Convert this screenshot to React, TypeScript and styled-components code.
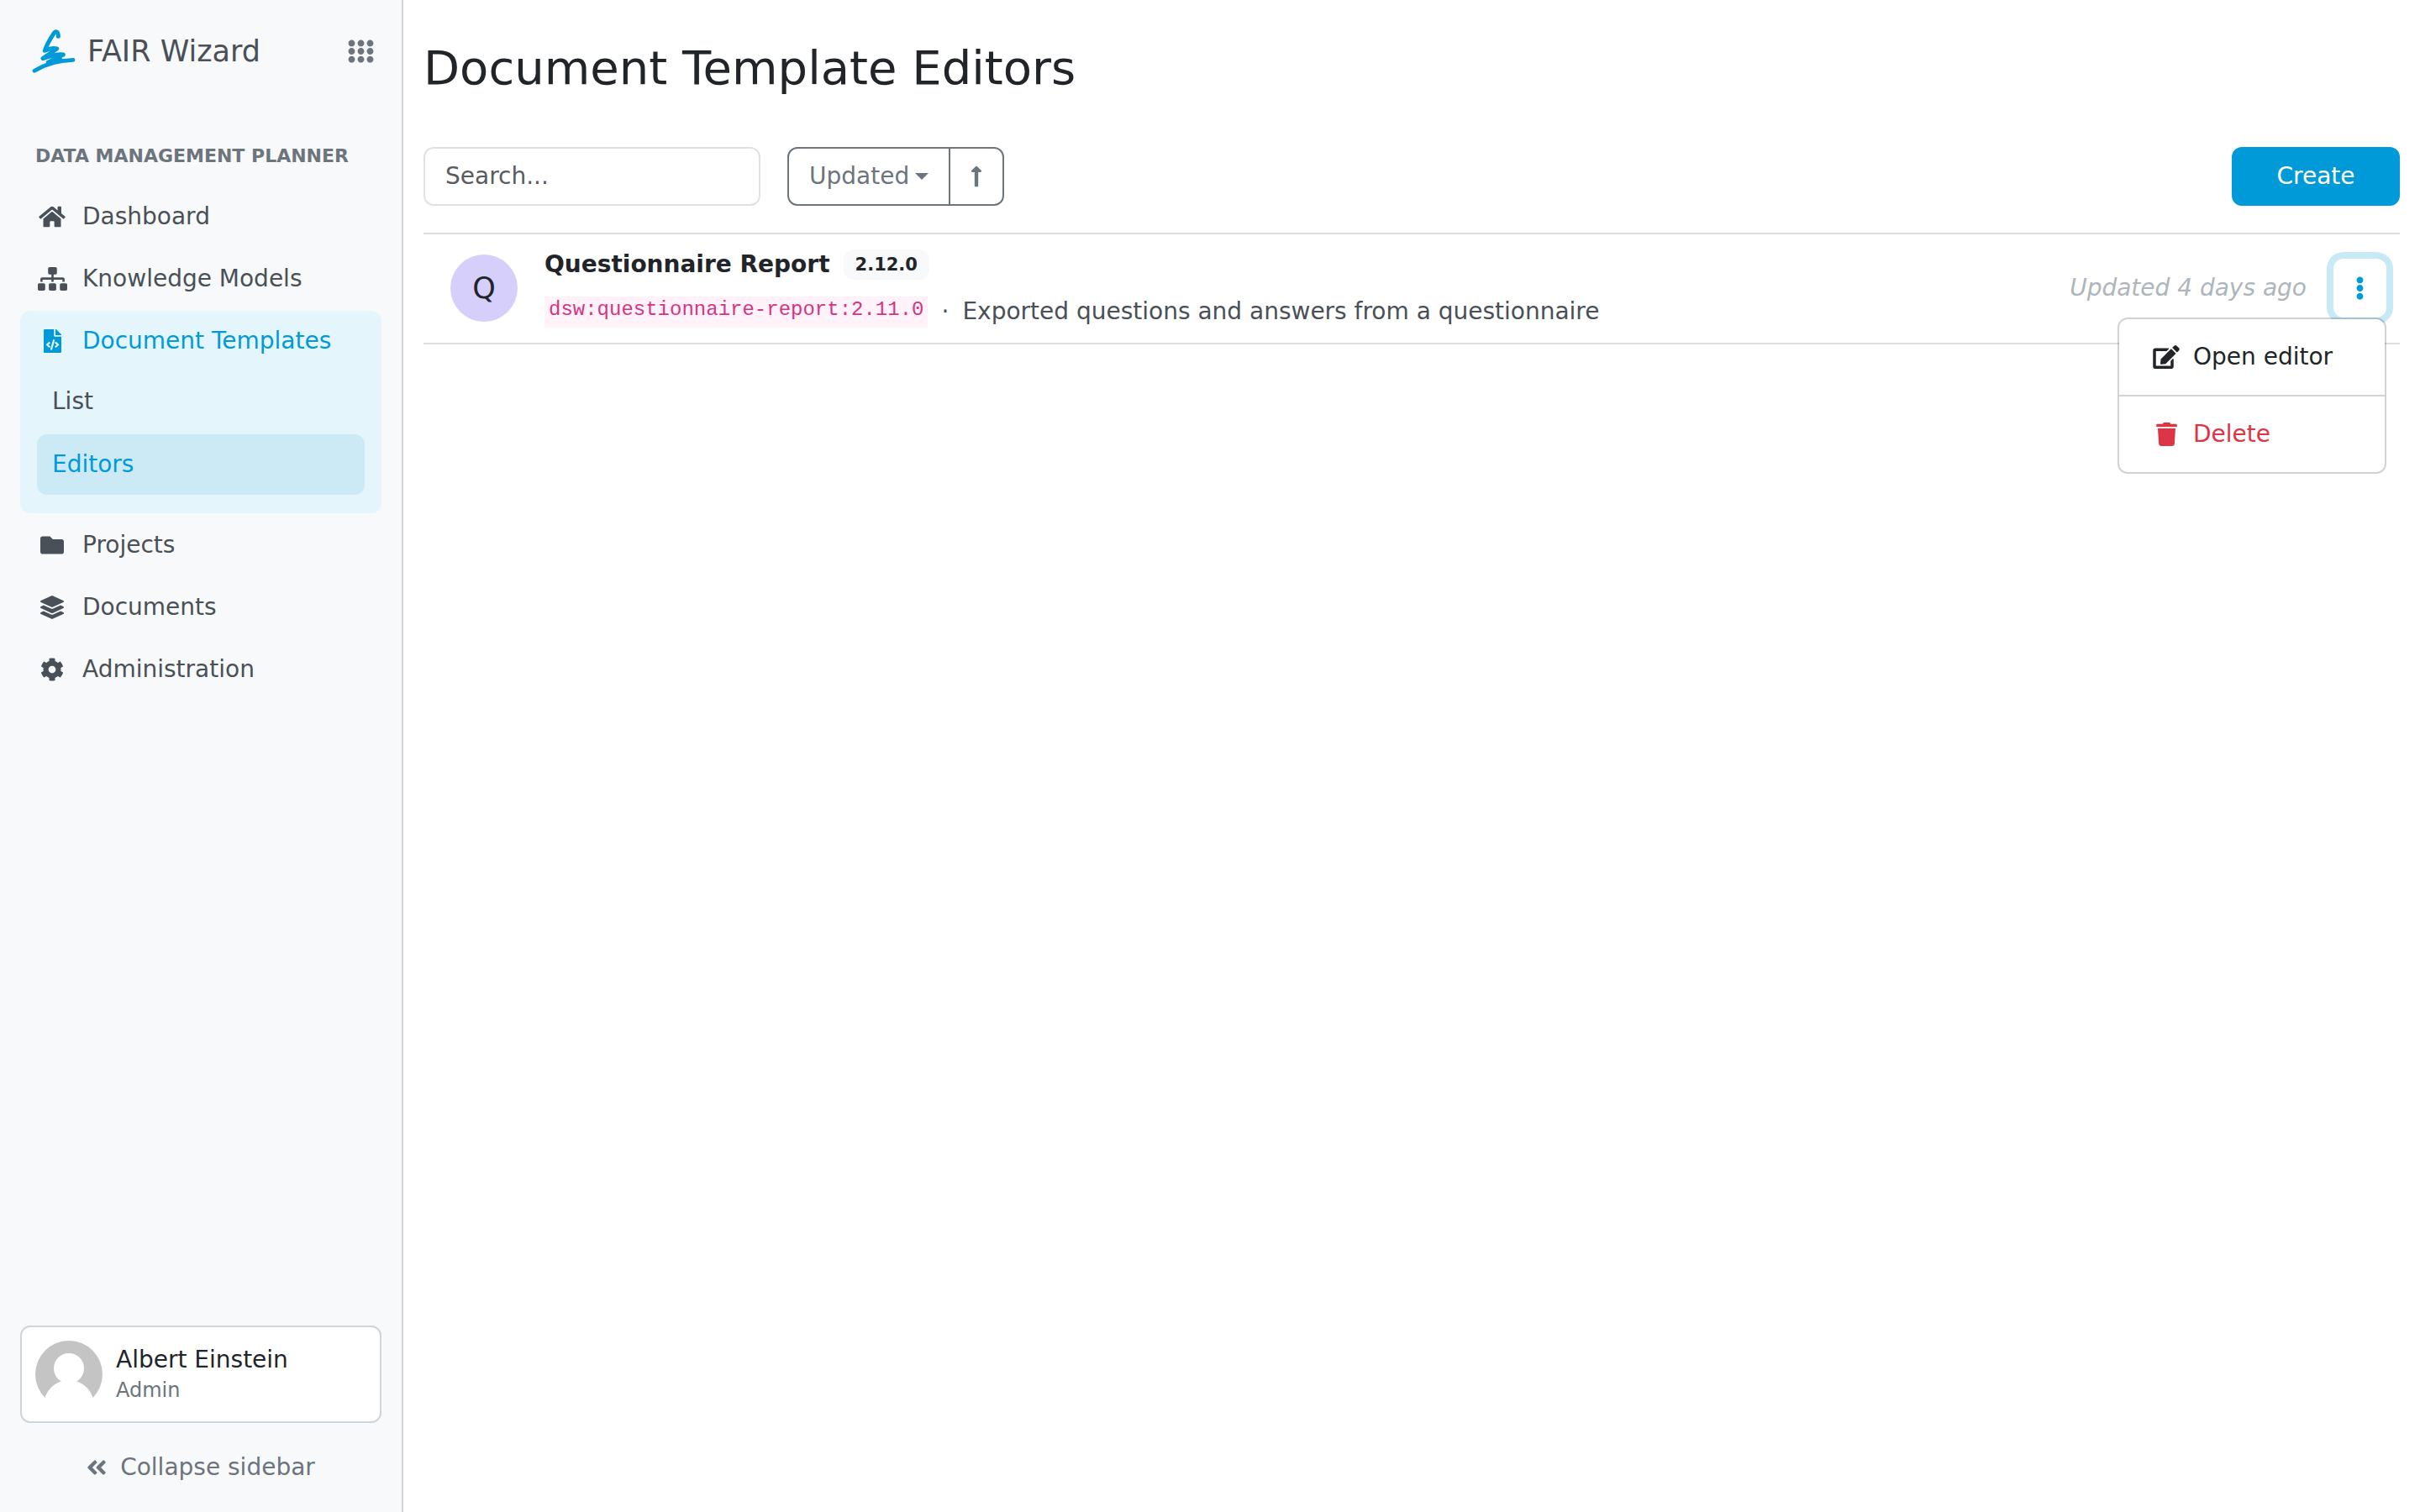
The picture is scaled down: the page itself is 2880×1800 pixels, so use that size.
import React, { useState } from 'react';
import styled, { createGlobalStyle, css } from 'styled-components';
import {
  FaAngleDoubleLeft,
  FaCog,
  FaEdit,
  FaEllipsisV,
  FaFileCode,
  FaFolder,
  FaHome,
  FaLayerGroup,
  FaLongArrowAltUp,
  FaSitemap,
  FaTrash,
} from 'react-icons/fa';

const color = {
  primary: '#009ad9',
  primaryTint: '#e5f5fc',
  primarySoft: '#cceaf6',
  ring: '#c8eaf6',
  text: '#212529',
  nav: '#495057',
  muted: '#6c757d',
  faint: '#adb5bd',
  danger: '#dc3545',
  code: '#d63384',
  codeBg: '#fff3f9',
  light: '#f8f9fb',
  border: '#ced4da',
  inputBorder: '#dee2e6',
  line: '#dedede',
  menuBorder: 'rgba(0, 0, 0, 0.175)',
};

const GlobalStyle = createGlobalStyle`
  *, *::before, *::after { box-sizing: border-box; }
  body {
    margin: 0;
    background: #fff;
    color: ${color.text};
    font-family: "DejaVu Sans", Verdana, sans-serif;
    font-size: 28px;
    line-height: 42px;
  }
  button, input, select { font: inherit; color: inherit; margin: 0; }
  button { background: none; border: 0; padding: 0; cursor: pointer; }
  a { color: inherit; text-decoration: none; }
  svg { display: block; flex: none; }
`;

const Shell = styled.div`
  display: flex;
  min-height: 100vh;
`;

const Sidebar = styled.aside`
  display: flex;
  flex-direction: column;
  flex: none;
  width: 480px;
  padding: 0 24px 17px;
  background: ${color.light};
  border-right: 2px solid ${color.border};
`;

const Brand = styled.div`
  display: flex;
  align-items: center;
  height: 122px;
  padding: 0 8px 0 14px;
`;

const BrandLink = styled.a`
  display: flex;
  align-items: center;
  flex: 1;
  gap: 14px;
  color: ${color.nav};
  font-size: 35px;
`;

const AppSwitch = styled.button`
  display: flex;
  color: ${color.muted};
`;

const Icon = styled.span<{ $glyph?: number; $width?: number }>`
  display: flex;
  justify-content: center;
  flex: none;
  width: ${(p) => (p.$width ? `${p.$width}px` : 'auto')};

  svg {
    width: ${(p) => p.$glyph ?? 28}px;
    height: 28px;
  }
`;

const SectionTitle = styled.h2`
  margin: 47px 0 19px;
  padding-left: 18px;
  color: ${color.muted};
  font-size: 22px;
  font-weight: 700;
  line-height: 34px;
  text-transform: uppercase;
`;

const NavList = styled.ul`
  display: flex;
  flex-direction: column;
  gap: 2px;
  margin: 0;
  padding: 0;
  list-style: none;
`;

const SubList = styled(NavList)`
  gap: 3px;
  padding: 0 20px 22px;
`;

const NavItem = styled.li<{ $open?: boolean }>`
  border-radius: 12px;
  background: ${(p) => (p.$open ? color.primaryTint : 'transparent')};
`;

const NavLink = styled.a<{ $active?: boolean }>`
  display: flex;
  align-items: center;
  gap: 18px;
  height: 72px;
  padding: 0 20px;
  color: ${(p) => (p.$active ? color.primary : color.nav)};
`;

const SubLink = styled(NavLink)`
  padding: 0 18px;
  border-radius: 12px;
  background: ${(p) => (p.$active ? color.primarySoft : 'transparent')};
`;

const UserCard = styled.a`
  display: flex;
  align-items: center;
  gap: 16px;
  margin-top: auto;
  padding: 16px;
  background: #fff;
  border: 2px solid ${color.border};
  border-radius: 12px;
`;

const UserText = styled.div`
  display: flex;
  flex-direction: column;
  padding-top: 2px;
  line-height: 36px;
`;

const UserRole = styled.span`
  color: ${color.muted};
  font-size: 24px;
`;

const Collapse = styled.button`
  display: flex;
  align-items: center;
  justify-content: center;
  gap: 16px;
  height: 72px;
  margin-top: 17px;
  color: ${color.muted};
`;

const Main = styled.main`
  flex: 1;
  min-width: 0;
  padding: 47px 24px 24px;
`;

const Title = styled.h1`
  margin: 0 0 60px;
  font-size: 56px;
  font-weight: 400;
  line-height: 68px;
`;

const Toolbar = styled.div`
  display: flex;
  align-items: stretch;
  gap: 32px;
  height: 70px;
  margin-bottom: 32px;
`;

const Search = styled.input`
  width: 401px;
  padding: 0 24px;
  background: #fff;
  border: 2px solid ${color.inputBorder};
  border-radius: 12px;

  &::placeholder {
    color: #585c5f;
    opacity: 1;
  }
`;

const SortGroup = styled.div`
  display: flex;
  color: ${color.muted};
  border: 2px solid ${color.muted};
  border-radius: 12px;
`;

const SortField = styled.div`
  position: relative;
  display: flex;
`;

const SortSelect = styled.select`
  appearance: none;
  padding: 0 46px 0 24px;
  background: transparent;
  border: 0;
  outline: 0;
`;

const Caret = styled.span`
  position: absolute;
  top: 29px;
  right: 24px;
  border: 8px solid transparent;
  border-top-color: currentColor;
  border-bottom: 0;
  pointer-events: none;
`;

const SortDirection = styled.button`
  display: flex;
  align-items: center;
  padding: 0 24px;
  border-left: 2px solid ${color.muted};
`;

const CreateButton = styled.button`
  width: 200px;
  margin-left: auto;
  color: #fff;
  background: ${color.primary};
  border-radius: 12px;
`;

const List = styled.ul`
  margin: 0;
  padding: 0;
  border-top: 2px solid ${color.line};
  list-style: none;
`;

const Row = styled.li`
  display: flex;
  align-items: center;
  gap: 32px;
  padding: 15px 16px 16px 32px;
  border-bottom: 2px solid ${color.line};
`;

const Initial = styled.span`
  display: flex;
  align-items: center;
  justify-content: center;
  flex: none;
  width: 80px;
  height: 80px;
  font-size: 35px;
  background: #d6cffc;
  border-radius: 50%;
`;

const RowText = styled.div`
  display: flex;
  flex-direction: column;
  flex: 1;
  gap: 14px;
  min-width: 0;
`;

const RowLine = styled.div<{ $tone?: string }>`
  display: flex;
  align-items: center;
  gap: 16px;
  height: 42px;
  color: ${(p) => p.$tone ?? 'inherit'};
`;

const RowTitle = styled.a`
  font-weight: 700;
`;

const Badge = styled.span`
  padding: 0 14px;
  font-size: 21px;
  font-weight: 700;
  line-height: 36px;
  background: ${color.light};
  border-radius: 12px;
`;

const Code = styled.code`
  padding: 0 5px 5px;
  color: ${color.code};
  font-family: "Liberation Mono", "Courier New", monospace;
  font-size: 24px;
  line-height: 32px;
  background: ${color.codeBg};
`;

const Updated = styled.span`
  color: ${color.faint};
  font-style: italic;
`;

const MenuAnchor = styled.div`
  position: relative;
`;

const MenuToggle = styled.button<{ $open: boolean }>`
  display: flex;
  align-items: center;
  justify-content: center;
  width: 63px;
  height: 70px;
  color: ${color.primary};
  border-radius: 12px;
  ${(p) =>
    p.$open &&
    css`
      box-shadow: 0 0 0 8px ${color.ring};
    `}
`;

const Menu = styled.div`
  position: absolute;
  top: 100%;
  right: 0;
  z-index: 1;
  width: 320px;
  background: #fff;
  background-clip: padding-box;
  border: 2px solid ${color.menuBorder};
  border-radius: 12px;
`;

const MenuItem = styled.button<{ $danger?: boolean }>`
  display: flex;
  align-items: center;
  gap: 14px;
  width: 100%;
  height: 90px;
  padding: 0 38px;
  color: ${(p) => (p.$danger ? color.danger : color.text)};

  & + & {
    height: 92px;
    border-top: 2px solid ${color.menuBorder};
  }
`;

const Logo = () => (
  <svg width="52" height="52" viewBox="0 0 156 156" fill="none" stroke={color.primary} strokeWidth="15" strokeLinecap="round" strokeLinejoin="round" aria-hidden="true">
    <path d="M94 25C94 6 85 4 77 16C65 34 53 54 46 76C60 69 76 66 89 69L39 104C62 96 88 87 112 90L58 118" />
    <path d="M9 148C50 122 90 111 147 109" strokeWidth="14" />
    <path d="M62 121L104 108" strokeWidth="12" />
  </svg>
);

const DefaultAvatar = () => (
  <svg width="80" height="80" viewBox="0 0 80 80" aria-hidden="true">
    <circle cx="40" cy="40" r="40" fill="#c4c4c4" />
    <circle cx="40" cy="33" r="18" fill="#fff" />
    <circle cx="40" cy="77" r="30" fill="#fff" />
  </svg>
);

const navBefore = [
  { label: 'Dashboard', icon: <FaHome />, glyph: 32 },
  { label: 'Knowledge Models', icon: <FaSitemap />, glyph: 35 },
];

const navAfter = [
  { label: 'Projects', icon: <FaFolder />, glyph: 28 },
  { label: 'Documents', icon: <FaLayerGroup />, glyph: 28 },
  { label: 'Administration', icon: <FaCog />, glyph: 28 },
];

type NavEntryProps = {
  label: string;
  icon: React.ReactNode;
  glyph: number;
  open?: boolean;
  children?: React.ReactNode;
};

const NavEntry = ({ label, icon, glyph, open, children }: NavEntryProps) => (
  <NavItem $open={open}>
    <NavLink href="#" $active={open}>
      <Icon $width={36} $glyph={glyph}>
        {icon}
      </Icon>
      {label}
    </NavLink>
    {children}
  </NavItem>
);

export default function App() {
  const [menuOpen, setMenuOpen] = useState(true);
  const [query, setQuery] = useState('');

  return (
    <>
      <GlobalStyle />
      <Shell>
        <Sidebar>
          <Brand>
            <BrandLink href="#">
              <Logo />
              FAIR Wizard
            </BrandLink>
            <AppSwitch type="button" aria-label="Switch application">
              <Icon $glyph={11}>
                <FaEllipsisV />
                <FaEllipsisV />
                <FaEllipsisV />
              </Icon>
            </AppSwitch>
          </Brand>

          <nav>
            <SectionTitle>Data Management Planner</SectionTitle>
            <NavList>
              {navBefore.map((item) => (
                <NavEntry key={item.label} {...item} />
              ))}
              <NavEntry label="Document Templates" icon={<FaFileCode />} glyph={21} open>
                <SubList>
                  <li>
                    <SubLink href="#">List</SubLink>
                  </li>
                  <li>
                    <SubLink href="#" $active aria-current="page">
                      Editors
                    </SubLink>
                  </li>
                </SubList>
              </NavEntry>
              {navAfter.map((item) => (
                <NavEntry key={item.label} {...item} />
              ))}
            </NavList>
          </nav>

          <UserCard href="#">
            <DefaultAvatar />
            <UserText>
              <span>Albert Einstein</span>
              <UserRole>Admin</UserRole>
            </UserText>
          </UserCard>
          <Collapse type="button">
            <Icon $glyph={24}>
              <FaAngleDoubleLeft />
            </Icon>
            Collapse sidebar
          </Collapse>
        </Sidebar>

        <Main>
          <Title>Document Template Editors</Title>

          <Toolbar>
            <Search
              type="text"
              aria-label="Search"
              placeholder="Search..."
              value={query}
              onChange={(e) => setQuery(e.target.value)}
            />
            <SortGroup>
              <SortField>
                <SortSelect aria-label="Sort by" defaultValue="Updated">
                  <option>Name</option>
                  <option>Updated</option>
                </SortSelect>
                <Caret />
              </SortField>
              <SortDirection type="button" aria-label="Sort direction">
                <Icon $glyph={14}>
                  <FaLongArrowAltUp />
                </Icon>
              </SortDirection>
            </SortGroup>
            <CreateButton type="button">Create</CreateButton>
          </Toolbar>

          <List>
            <Row>
              <Initial>Q</Initial>
              <RowText>
                <RowLine>
                  <RowTitle href="#">Questionnaire Report</RowTitle>
                  <Badge>2.12.0</Badge>
                </RowLine>
                <RowLine $tone={color.nav}>
                  <Code>dsw:questionnaire-report:2.11.0</Code>
                  <span>·</span>
                  <span>Exported questions and answers from a questionnaire</span>
                </RowLine>
              </RowText>
              <Updated>Updated 4 days ago</Updated>
              <MenuAnchor>
                <MenuToggle
                  type="button"
                  $open={menuOpen}
                  aria-label="Actions"
                  aria-expanded={menuOpen}
                  onClick={() => setMenuOpen(!menuOpen)}
                >
                  <Icon $glyph={11}>
                    <FaEllipsisV />
                  </Icon>
                </MenuToggle>
                {menuOpen && (
                  <Menu>
                    <MenuItem type="button">
                      <Icon $width={36} $glyph={32}>
                        <FaEdit />
                      </Icon>
                      Open editor
                    </MenuItem>
                    <MenuItem type="button" $danger>
                      <Icon $width={36} $glyph={25}>
                        <FaTrash />
                      </Icon>
                      Delete
                    </MenuItem>
                  </Menu>
                )}
              </MenuAnchor>
            </Row>
          </List>
        </Main>
      </Shell>
    </>
  );
}
